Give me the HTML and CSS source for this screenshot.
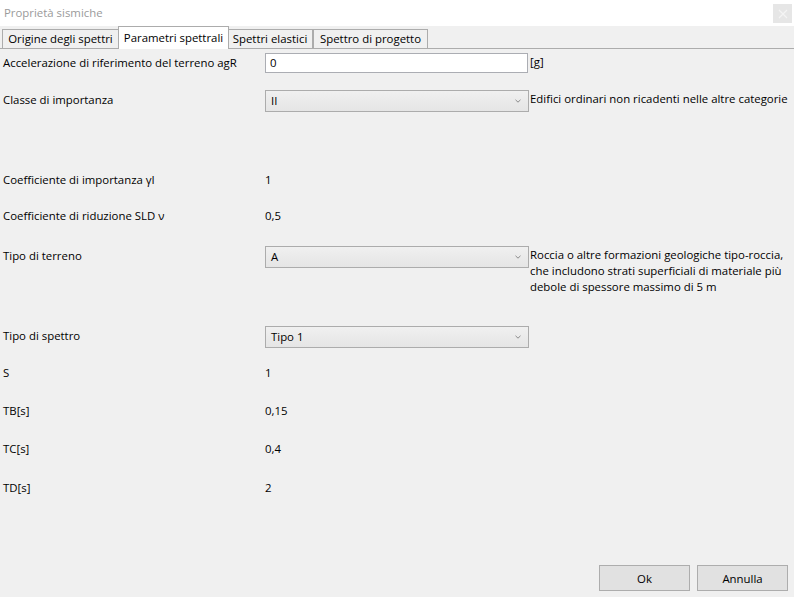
FILE: index.html
```html
<!DOCTYPE html>
<html lang="it">
<head>
<meta charset="utf-8">
<title>Proprietà sismiche</title>
<link rel="stylesheet" href="styles.css">
</head>
<body>
<div class="window">
  <div class="titlebar">
    <span class="title">Proprietà sismiche</span>
    <span class="close"><svg width="10" height="10" viewBox="0 0 10 10"><path d="M1 1 L9 9 M9 1 L1 9" stroke="#f4f4f4" stroke-width="1.2" fill="none"/></svg></span>
  </div>
  <div class="tabs">
    <div class="tab t1">Origine degli spettri</div>
    <div class="tab t2 active">Parametri spettrali</div>
    <div class="tab t3">Spettri elastici</div>
    <div class="tab t4">Spettro di progetto</div>
  </div>
  <div class="content">
    <div class="row r1">
      <div class="label">Accelerazione di riferimento del terreno agR</div>
      <div class="input">0</div>
      <div class="unit">[g]</div>
    </div>
    <div class="row r2">
      <div class="label lc">Classe di importanza</div>
      <div class="combo"><span>II</span><svg class="chev" width="6" height="4" viewBox="0 0 6 4"><path d="M0.5 0.8 L3 3.2 L5.5 0.8" stroke="#8a8a8a" stroke-width="1" fill="none"/></svg></div>
      <div class="desc">Edifici ordinari non ricadenti nelle altre categorie</div>
    </div>
    <div class="row r3">
      <div class="label">Coefficiente di importanza γI</div>
      <div class="value">1</div>
    </div>
    <div class="row r4">
      <div class="label">Coefficiente di riduzione SLD ν</div>
      <div class="value">0,5</div>
    </div>
    <div class="row r5">
      <div class="label lc">Tipo di terreno</div>
      <div class="combo"><span>A</span><svg class="chev" width="6" height="4" viewBox="0 0 6 4"><path d="M0.5 0.8 L3 3.2 L5.5 0.8" stroke="#8a8a8a" stroke-width="1" fill="none"/></svg></div>
      <div class="desc">Roccia o altre formazioni geologiche tipo-roccia,<br>che includono strati superficiali di materiale più<br>debole di spessore massimo di 5 m</div>
    </div>
    <div class="row r6">
      <div class="label lc">Tipo di spettro</div>
      <div class="combo"><span>Tipo 1</span><svg class="chev" width="6" height="4" viewBox="0 0 6 4"><path d="M0.5 0.8 L3 3.2 L5.5 0.8" stroke="#8a8a8a" stroke-width="1" fill="none"/></svg></div>
    </div>
    <div class="row r7">
      <div class="label">S</div>
      <div class="value">1</div>
    </div>
    <div class="row r8">
      <div class="label">TB[s]</div>
      <div class="value">0,15</div>
    </div>
    <div class="row r9">
      <div class="label">TC[s]</div>
      <div class="value">0,4</div>
    </div>
    <div class="row r10">
      <div class="label">TD[s]</div>
      <div class="value">2</div>
    </div>
  </div>
  <div class="footer">
    <button class="btn">Ok</button>
    <button class="btn">Annulla</button>
  </div>
</div>
</body>
</html>
```

FILE: styles.css
```css
* { box-sizing: border-box; }
html, body { margin: 0; padding: 0; }
body {
  width: 794px;
  height: 597px;
  overflow: hidden;
  background: #f0f0f0;
  font-family: "Open Sans", "Noto Sans", sans-serif;
  font-size: 11.4px;
  color: #000;
}
.window {
  display: flex;
  flex-direction: column;
  height: 597px;
}
.titlebar {
  height: 26px;
  background: #fff;
  display: flex;
  align-items: center;
  justify-content: space-between;
  padding: 0 2px 0 4px;
}
.title {
  color: #9a9a9a;
  font-size: 11.4px;
  position: relative;
  top: -1px;
}
.close {
  width: 19px;
  height: 19px;
  background: #e6e6e6;
  display: flex;
  align-items: center;
  justify-content: center;
  margin-top: 1px;
}
.tabs {
  height: 23px;
  display: flex;
  align-items: flex-end;
  padding-left: 2px;
  border-bottom: 1px solid #acacac;
}
.tab {
  height: 19px;
  border: 1px solid #acacac;
  border-bottom: none;
  background: #f0f0f0;
  display: flex;
  align-items: center;
  justify-content: center;
  white-space: nowrap;
  padding-bottom: 1px;
}
.t1 { width: 117px; }
.t2 { width: 111px; margin-left: -1px; }
.t3 { width: 85px; margin-left: -1px; border-left: none; }
.t4 { width: 115px; }
.tab.active {
  height: 23px;
  background: #fff;
  margin-bottom: -1px;
  padding-bottom: 2px;
  position: relative;
  z-index: 1;
}
.content {
  padding: 4px 0 0 3px;
}
.row {
  display: flex;
  align-items: flex-start;
}
.label {
  width: 262px;
  line-height: 15px;
  white-space: nowrap;
}
.value {
  line-height: 15px;
}
.r1 .label { line-height: 19px; }
.r1 { height: 37px; }
.r2 { height: 82px; }
.r3 { height: 36px; }
.r4 { height: 38px; }
.r5 { height: 80px; }
.r6 { height: 39px; }
.r7 { height: 38px; }
.r8 { height: 38px; }
.r9 { height: 39px; }
.r10 { height: 38px; }
.label.lc { line-height: 19px; }
.input {
  width: 263px;
  height: 20px;
  background: #fff;
  border: 1px solid #abadb3;
  line-height: 18px;
  padding-left: 4px;
}
.unit {
  margin-left: 2px;
  line-height: 17px;
}
.combo {
  width: 264px;
  height: 22px;
  border: 1px solid #acacac;
  background: linear-gradient(#f0f0f0, #e5e5e5);
  display: flex;
  align-items: center;
  justify-content: space-between;
  padding: 0 7px 0 5px;
}
.combo span { line-height: 20px; }
.chev { display: block; }
.desc {
  margin-left: 1px;
  line-height: 16px;
  padding-top: 1px;
  white-space: nowrap;
}
.footer {
  margin-top: auto;
  display: flex;
  justify-content: flex-end;
  gap: 7px;
  padding: 0 6px 6px 0;
}
.btn {
  width: 91px;
  height: 26px;
  background: #e1e1e1;
  border: 1px solid #adadad;
  font-family: inherit;
  font-size: 11.4px;
  color: #000;
  padding: 0;
}
```
